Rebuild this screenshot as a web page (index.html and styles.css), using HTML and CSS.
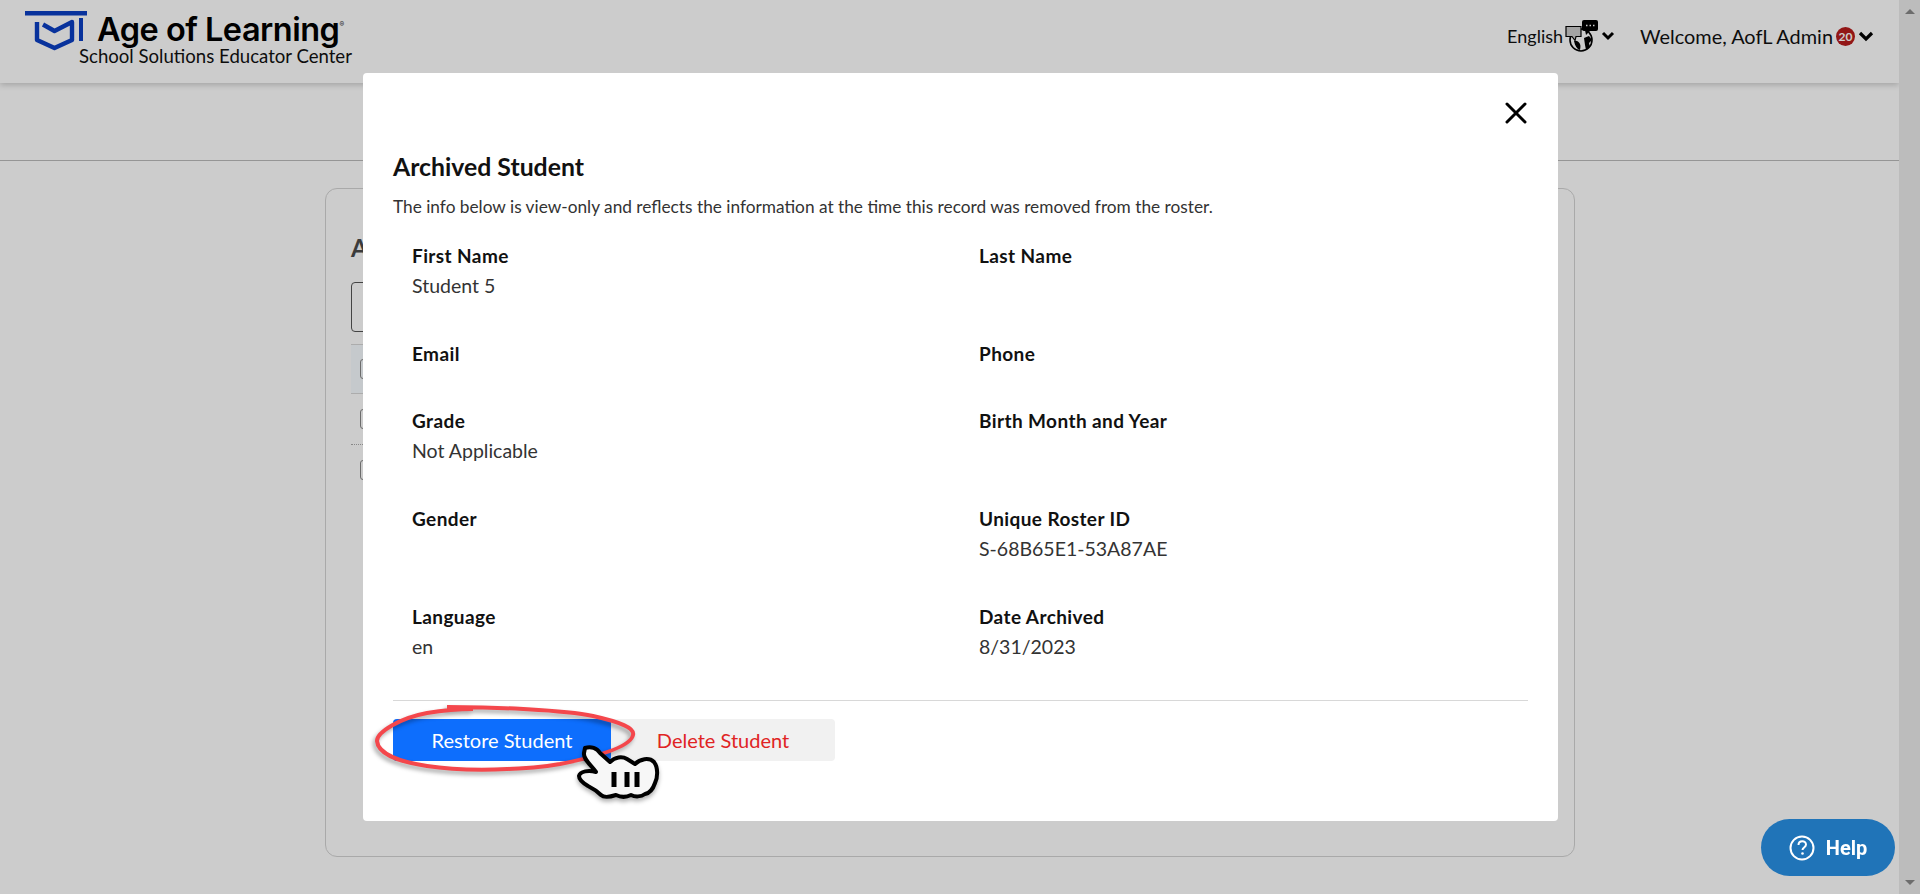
FILE: index.html
```html
<!DOCTYPE html>
<html>
<head>
  <title>Archived Student</title>
  <link rel="stylesheet" href="styles.css">
</head>
<body>

<div class="page">
  <header class="topbar">
    <div class="brand">
      <svg class="brand-logo" viewBox="0 0 62 40" width="62" height="40">
        <path d="M0 2.3H62" stroke="#0b3fc4" stroke-width="4.6" fill="none"/>
        <path d="M12 11V29L29.5 37L47 29V11L29.5 20L18 13.5" stroke="#0b3fc4" stroke-width="4.4" fill="none" stroke-linejoin="round"/>
        <path d="M56 7V30" stroke="#0b3fc4" stroke-width="4" fill="none"/>
      </svg>
      <div class="brand-text">
        <div class="brand-name">Age of Learning<sup class="brand-reg">®</sup></div>
        <div class="brand-sub">School Solutions Educator Center</div>
      </div>
    </div>
    <div class="topbar-right">
      <div class="lang">
        <span>English</span>
        <svg class="lang-icon" viewBox="0 0 34 32" width="34" height="32">
          <circle cx="16" cy="20" r="11" fill="none" stroke="#000" stroke-width="1.6"/>
          <path d="M9 21c3-1 5 1 6 3s0 5 0 6c-3-1-5-4-6-9zM19 18l5-2 3 4-3 3 1 4-4 3-1-5z" fill="#000"/>
          <path d="M1 6.5h15v10h-5l-1 4-3-4H1z" fill="#ccc" stroke="#000" stroke-width="1.2"/>
          <rect x="17" y="0" width="16" height="11" rx="2" fill="#000"/>
          <path d="M20 10h6l-5 5z" fill="#000"/>
          <path d="M21 5.5h1.5M24.5 5.5h1.5M28 5.5h1.5" stroke="#fff" stroke-width="1.5"/>
        </svg>
        <svg class="chevron" viewBox="0 0 14 10" width="14" height="10"><path d="M2 2l5 5 5-5" fill="none" stroke="#000" stroke-width="3"/></svg>
      </div>
      <div class="welcome">
        <span>Welcome, AofL Admin</span>
        <span class="badge">20</span>
        <svg class="chevron-lg" viewBox="0 0 16 11" width="16" height="11"><path d="M2 2l6 6 6-6" fill="none" stroke="#000" stroke-width="3.2"/></svg>
      </div>
    </div>
  </header>

  <div class="subbar"></div>

  <main class="content">
    <section class="bg-card">
      <h3 class="bg-title">A</h3>
      <div class="bg-search"></div>
      <div class="bg-row bg-row-head"><span class="bg-check"></span></div>
      <div class="bg-row"><span class="bg-check"></span></div>
      <div class="bg-row bg-row-dotted"><span class="bg-check"></span></div>
    </section>
  </main>
</div>

<div class="scrollbar">
  <span class="scroll-up"></span>
  <span class="scroll-down"></span>
</div>

<div class="overlay"></div>

<div class="modal">
  <button class="close-btn" title="Close">
    <svg viewBox="0 0 24 24" width="24" height="24"><path d="M3 3l18 18M21 3L3 21" stroke="#000" stroke-width="3" stroke-linecap="round"/></svg>
  </button>

  <h2 class="modal-title">Archived Student</h2>
  <p class="modal-note">The info below is view-only and reflects the information at the time this record was removed from the roster.</p>

  <div class="fields">
    <div class="field field-tall"><div class="field-label">First Name</div><div class="field-value">Student 5</div></div>
    <div class="field field-tall"><div class="field-label">Last Name</div></div>
    <div class="field"><div class="field-label">Email</div></div>
    <div class="field"><div class="field-label">Phone</div></div>
    <div class="field field-tall"><div class="field-label">Grade</div><div class="field-value">Not Applicable</div></div>
    <div class="field field-tall"><div class="field-label">Birth Month and Year</div></div>
    <div class="field field-tall"><div class="field-label">Gender</div></div>
    <div class="field field-tall"><div class="field-label">Unique Roster ID</div><div class="field-value">S-68B65E1-53A87AE</div></div>
    <div class="field"><div class="field-label">Language</div><div class="field-value">en</div></div>
    <div class="field"><div class="field-label">Date Archived</div><div class="field-value">8/31/2023</div></div>
  </div>

  <div class="actions">
    <button class="restore-btn">Restore Student</button>
    <button class="delete-btn">Delete Student</button>

    <!-- hand drawn ring + pointer over the restore button -->
    <svg class="ring" viewBox="0 0 270 72" width="270" height="72">
      <path d="M72 3C120 3 190 6 218 12C245 18 260 24 258 31C256 42 225 52 185 60C150 66 90 68 52 62C25 58 3 50 2 37C2 28 25 14 52 9C70 6 85 5 98 5" fill="none" stroke="#f4474c" stroke-width="4"/>
    </svg>
    <svg class="pointer" viewBox="0 0 84 56" width="84" height="56">
      <path d="M8 3C14 1 20 3 23 8L33 17C38 12 45 11 50 14L58 19C63 14 72 12 77 17C81 22 81 32 78 38C76 44 73 48 68 49C64 52 58 52 54 50C48 53 43 52 39 50C33 52 27 53 24 50C20 46 15 43 11 41C6 38 2 35 2 31C3 26 12 25 19 27C14 20 6 14 7 8Z" fill="#f7f7f7" stroke="#000" stroke-width="4" stroke-linejoin="round"/>
      <path d="M37 27V42M50 27V42M60 27V42" stroke="#000" stroke-width="5"/>
    </svg>
  </div>
</div>

<button class="help-btn">
  <svg viewBox="0 0 26 26" width="26" height="26">
    <circle cx="13" cy="13" r="11.5" fill="none" stroke="#fff" stroke-width="2"/>
    <path d="M9.5 10c0-5 7.5-5 7.5-.5 0 3-3.5 3-3.5 5.5" fill="none" stroke="#fff" stroke-width="2"/>
    <circle cx="13.5" cy="18.5" r="1.3" fill="#fff"/>
  </svg>
  Help
</button>

</body>
</html>
```
FILE: styles.css
```css
* {
  box-sizing: border-box;
}

body {
  font-family: Lato, "Liberation Sans", sans-serif;
  background-color: #fff;
  margin: 0;
  height: 894px;
  overflow: hidden;
  color: #000;
}

.page {
  height: 894px;
  display: flex;
  flex-direction: column;
  margin-right: 21px;
}

.topbar {
  height: 83px;
  display: flex;
  justify-content: space-between;
  background: #fff;
  box-shadow: 0 2px 6px rgba(0,0,0,0.2);
  padding: 11px 25px 0 25px;
}

.brand {
  display: flex;
  align-items: flex-start;
}

.brand-logo {
  flex: none;
  margin-right: 10px;
}

.brand-text {
  margin-top: 4px;
}

.brand-name {
  font-family: Inter, sans-serif;
  font-weight: 600;
  font-size: 32.5px;
  line-height: 30px;
  letter-spacing: -0.5px;
  color: #000;
  white-space: nowrap;
}

.brand-reg {
  font-size: 7px;
  vertical-align: 14px;
  line-height: 0;
  color: #444;
}

.brand-sub {
  font-size: 18.6px;
  line-height: 18px;
  margin-left: -18px;
  margin-top: 2px;
  color: #111;
  white-space: nowrap;
}

.topbar-right {
  display: flex;
  align-items: flex-start;
  padding-top: 9px;
}

.lang {
  display: flex;
  align-items: center;
  font-size: 18px;
  height: 32px;
  color: #111;
}

.lang-icon {
  margin-left: 2px;
}

.chevron {
  margin-left: 2px;
}

.welcome {
  display: flex;
  align-items: center;
  height: 32px;
  font-size: 19.9px;
  margin-left: 25px;
  color: #111;
}

.badge {
  width: 19px;
  height: 19px;
  border-radius: 50%;
  background: #b71c1c;
  color: #fff;
  font-size: 12px;
  font-weight: 700;
  line-height: 19px;
  text-align: center;
  margin-left: 3px;
}

.chevron-lg {
  margin-left: 3px;
}

.subbar {
  height: 78px;
  border-bottom: 1px solid #bbb;
}

.content {
  flex: 1;
  padding: 27px 0 0 325px;
}

.bg-card {
  width: 1250px;
  height: 669px;
  border: 1px solid #d4d4d4;
  border-radius: 12px;
  padding: 44px 25px 0 25px;
}

.bg-title {
  font-size: 24px;
  line-height: 29px;
  font-weight: 700;
  margin: 0 0 20px;
  color: #4a4a4a;
}

.bg-search {
  width: 300px;
  height: 50px;
  border: 1px solid #555;
  border-radius: 4px;
  margin-bottom: 12px;
}

.bg-row {
  height: 50px;
  display: flex;
  align-items: center;
  padding-left: 9px;
}

.bg-row-head {
  background: #f7fcff;
  border-top: 1px solid #d8d8d8;
  border-bottom: 1px solid #d8d8d8;
}

.bg-row-dotted {
  border-top: 1px dotted #aaa;
}

.bg-check {
  width: 20px;
  height: 20px;
  border: 1px solid #888;
  border-radius: 3px;
}

.overlay {
  position: fixed;
  left: 0;
  top: 0;
  width: 100%;
  height: 100%;
  background-color: rgba(0,0,0,0.2);
}

.modal {
  position: fixed;
  left: 363px;
  top: 73px;
  width: 1195px;
  height: 748px;
  background: #fff;
  border-radius: 4px;
  padding: 0 30px;
}

.close-btn {
  position: absolute;
  right: 30px;
  top: 28px;
  background: transparent;
  border: none;
  padding: 0;
  width: 24px;
  height: 24px;
  cursor: pointer;
}

.modal-title {
  margin: 79px 0 0;
  font-size: 24.8px;
  line-height: 30px;
  font-weight: 700;
  color: #111;
}

.modal-note {
  margin: 14px 0 0;
  font-size: 17.28px;
  line-height: 22px;
  color: #333;
}

.fields {
  display: grid;
  grid-template-columns: 567px 568px;
  padding: 25px 0 0 19px;
}

.field {
  height: 67px;
}

.field-tall {
  height: 98px;
}

.field-label {
  font-size: 19px;
  line-height: 26px;
  font-weight: 700;
  letter-spacing: 0.4px;
  color: #111;
}

.field-value {
  font-size: 19.5px;
  line-height: 26px;
  margin-top: 4px;
  color: #333;
}

.actions {
  position: relative;
  display: flex;
  border-top: 1px solid #d8d8d8;
  margin-top: 29px;
  padding-top: 18px;
}

.restore-btn {
  width: 218px;
  height: 42px;
  background: #0d6efd;
  color: #fff;
  border: none;
  border-radius: 4px;
  font-family: inherit;
  font-size: 20px;
  cursor: pointer;
}

.delete-btn {
  width: 224px;
  height: 42px;
  background: #f1f1f1;
  color: #e02424;
  border: none;
  border-radius: 4px;
  font-family: inherit;
  font-size: 20px;
  cursor: pointer;
}

.ring {
  position: absolute;
  left: -18px;
  top: 3px;
  filter: drop-shadow(-2px 3px 2px rgba(0,0,0,0.35));
}

.pointer {
  position: absolute;
  left: 184px;
  top: 44px;
  filter: drop-shadow(0 3px 2px rgba(0,0,0,0.3));
}

.help-btn {
  position: fixed;
  left: 1761px;
  top: 819px;
  width: 134px;
  height: 57px;
  border-radius: 29px;
  border: none;
  background-color: #2074b8;
  color: #fff;
  font-family: Roboto, sans-serif;
  font-weight: 700;
  font-size: 20px;
  display: flex;
  align-items: center;
  justify-content: center;
  gap: 11px;
  cursor: pointer;
}

.scrollbar {
  position: fixed;
  right: 0;
  top: 0;
  width: 21px;
  height: 100%;
  background: #ebebeb;
}

.scroll-up {
  position: absolute;
  left: 6px;
  top: 9px;
  border: 5px solid transparent;
  border-top: 0;
  border-bottom-color: #888;
}

.scroll-down {
  position: absolute;
  left: 6px;
  bottom: 9px;
  border: 5px solid transparent;
  border-bottom: 0;
  border-top-color: #888;
}
```
